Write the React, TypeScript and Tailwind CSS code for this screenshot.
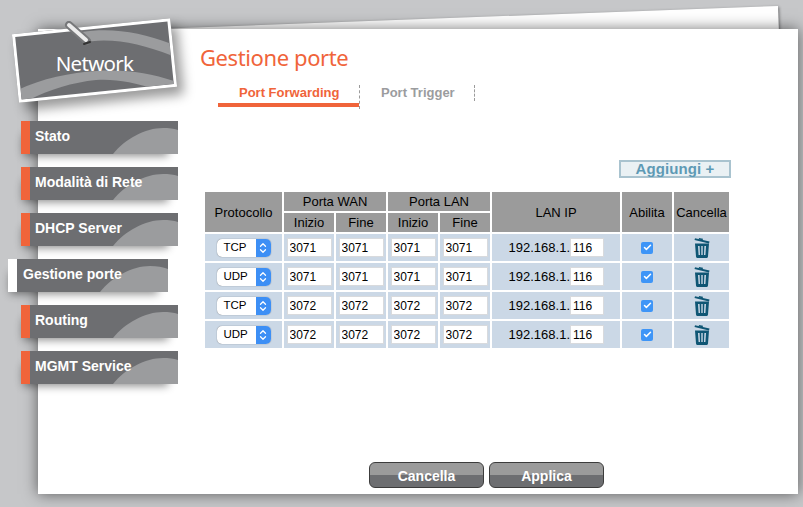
import { Check, ChevronDown, ChevronUp } from "lucide-react";

const menu = ["Stato", "Modalità di Rete", "DHCP Server", "Gestione porte", "Routing", "MGMT Service"];

const rows = [
  { proto: "TCP", port: "3071" },
  { proto: "UDP", port: "3071" },
  { proto: "TCP", port: "3072" },
  { proto: "UDP", port: "3072" },
];

function MenuItem({ label, active }: { label: string; active: boolean }) {
  return (
    <div
      className={
        active
          ? "relative -ml-[13px] flex h-[33px] w-[160px] shadow-[-4px_8px_8px_-6px_rgba(0,0,0,0.45)]"
          : "relative flex h-[33px] w-[157px] shadow-[-4px_8px_8px_-6px_rgba(0,0,0,0.45)]"
      }
    >
      <div className={active ? "w-[9px] bg-white" : "w-[9px] bg-[#f0643a]"} />
      <div className="relative flex-1 overflow-hidden bg-[#6d6e71]">
        <svg className="absolute left-0 top-0" width="151" height="33" viewBox="0 0 151 33">
          <path d="M83 33C95 18 115 7 133 7C140 7 146 8 151 10V33Z" fill="#9b9c9e" />
        </svg>
        <span
          className={
            active
              ? "relative block pl-[6px] pt-[7px] text-[14px] font-bold leading-[17px] text-white"
              : "relative block pl-[5px] pt-[7px] text-[14px] font-bold leading-[17px] text-white"
          }
        >
          {label}
        </span>
      </div>
    </div>
  );
}

function NetworkCard() {
  return (
    <div className="absolute left-[15px] top-[26px] z-10 flex h-[69px] w-[159px] items-center justify-center">
      <div className="absolute inset-0 -rotate-[5.8deg] overflow-hidden border-[3px] border-white bg-[#6d6e71] shadow-[6px_8px_12px_rgba(0,0,0,0.4)]">
        <svg className="absolute left-0 top-0" width="153" height="63" viewBox="3 3 153 63">
          <path d="M70 5C100 3 130 12 156 25V37C130 24 105 15 79 15L70 12Z" fill="#9b9c9e" />
          <path d="M0 56C25 47 55 44 80 45C110 46 135 53 159 64V70H140C115 60 100 55 79 54C55 54 30 59 8 68H0Z" fill="#9b9c9e" />
        </svg>
      </div>
      <span className="relative pt-[6px] font-['Noto_Sans',sans-serif] text-[20.5px] leading-none tracking-[-0.7px] text-white">
        Network
      </span>
      <svg className="absolute left-[49px] -top-[5px]" width="30" height="26" viewBox="0 0 30 26">
        <path d="M5 4L23 20" stroke="#77787a" strokeWidth="8" strokeLinecap="round" />
        <path d="M5 4L22 19" stroke="#ececec" strokeWidth="4" strokeLinecap="round" />
        <path d="M20 23L26 21" stroke="#333333" strokeWidth="2" strokeLinecap="round" />
      </svg>
    </div>
  );
}

function ProtoSelect({ value }: { value: string }) {
  return (
    <div className="mx-auto flex h-[18px] w-[54px] overflow-hidden rounded-[5px] bg-white shadow-[0_0_1px_rgba(0,0,0,0.6)]">
      <span className="flex-1 pl-[7px] text-left text-[11.5px] leading-[17px] text-black">{value}</span>
      <div className="flex w-[15px] flex-col items-center justify-center bg-[#3d8ff5] text-white">
        <ChevronUp size={10} strokeWidth={3} className="-mb-[2px]" />
        <ChevronDown size={10} strokeWidth={3} className="-mt-[2px]" />
      </div>
    </div>
  );
}

function TextBox({ value, className }: { value: string; className: string }) {
  return (
    <input
      readOnly
      value={value}
      className={`h-[19px] border border-[#d8dadd] bg-white text-[12px] text-black outline-none ${className}`}
    />
  );
}

function TrashIcon() {
  return (
    <svg className="mx-auto block" width="18" height="22" viewBox="0 0 18 22" fill="#0f5674">
      <path d="M2 1.2L16.5 4.6L16 6.4L1.5 3Z" />
      <path d="M6 1L10 1.8L9.6 3.2L5.6 2.4Z" />
      <path fillRule="evenodd" d="M2 6.5H16L15 19.5C14.9 20.6 14 21 13 21H5C4 21 3.1 20.6 3 19.5ZM5 9L5.6 18H7L6.6 9ZM8.3 9V18H9.7V9ZM11.4 9L11 18H12.4L13 9Z" />
    </svg>
  );
}

export default function App() {
  const headCls = "bg-[#9b9b9b] p-0 text-center align-middle text-[13px] font-normal leading-[15px] text-black";
  const cellCls = "bg-[#cbd8e6] p-0 text-center align-middle";

  return (
    <div className="relative h-[507px] w-[803px] overflow-hidden bg-[#c6c7c9] font-['Liberation_Sans',Arial,sans-serif]">
      {/* the two sheets of paper behind everything */}
      <div className="absolute left-[98px] top-[6px] h-[70px] w-[680px] origin-top-right -rotate-[2.1deg] bg-white shadow-[1px_1px_3px_rgba(0,0,0,0.45)]" />
      <div className="absolute left-[38px] top-[29px] h-[465px] w-[760px] bg-white shadow-[0_0_14px_rgba(0,0,0,0.55)]" />

      <NetworkCard />

      <div className="relative flex h-full">
        <aside className="flex w-[200px] shrink-0 flex-col gap-[13px] pl-[21px] pt-[121px]">
          {menu.map((m) => (
            <MenuItem key={m} label={m} active={m === "Gestione porte"} />
          ))}
        </aside>

        <main className="flex flex-1 flex-col pt-[41px]">
          <h1 className="font-['Noto_Sans',sans-serif] text-[22px] leading-[32px] tracking-[-0.4px] text-[#f0643a]">
            Gestione porte
          </h1>

          <div className="ml-[18px] mt-[12px] flex h-[22px] items-start">
            <div className="relative h-[22px] w-[141px] border-b-[4px] border-[#f0643a] pl-[21px] text-[13px] font-bold leading-[16px] text-[#f0643a]">
              Port Forwarding
              <span className="absolute -right-px top-0 h-[24px] border-r border-dashed border-[#9b9b9b]" />
            </div>
            <div className="h-[16px] w-[116px] border-r border-dashed border-[#9b9b9b] pl-[22px] text-[13px] font-bold leading-[16px] text-[#9b9c9e]">
              Port Trigger
            </div>
          </div>

          <div className="ml-[419px] mt-[53px] flex h-[18px] w-[112px] items-center justify-center border-2 border-[#a9c3cf] bg-[#eaf1f4] text-[15px] font-bold tracking-[0.1px] text-[#5e9ab5]">
            Aggiungi +
          </div>

          <table className="ml-[3px] mt-[12px] w-[528px] table-fixed border-separate border-spacing-[2px]">
            <colgroup>
              <col className="w-[77px]" />
              <col className="w-[50px]" />
              <col className="w-[50px]" />
              <col className="w-[50px]" />
              <col className="w-[50px]" />
              <col className="w-[128px]" />
              <col className="w-[50px]" />
              <col className="w-[55px]" />
            </colgroup>
            <thead>
              <tr className="h-[19px]">
                <th rowSpan={2} className={headCls}>Protocollo</th>
                <th colSpan={2} className={headCls}>Porta WAN</th>
                <th colSpan={2} className={headCls}>Porta LAN</th>
                <th rowSpan={2} className={headCls}>LAN IP</th>
                <th rowSpan={2} className={headCls}>Abilita</th>
                <th rowSpan={2} className={headCls}>Cancella</th>
              </tr>
              <tr className="h-[19px]">
                <th className={headCls}>Inizio</th>
                <th className={headCls}>Fine</th>
                <th className={headCls}>Inizio</th>
                <th className={headCls}>Fine</th>
              </tr>
            </thead>
            <tbody>
              {rows.map((r, i) => (
                <tr key={i} className="h-[27px]">
                  <td className={cellCls}>
                    <ProtoSelect value={r.proto} />
                  </td>
                  {[0, 1, 2, 3].map((n) => (
                    <td key={n} className={cellCls}>
                      <TextBox value={r.port} className="mx-auto block w-[45px] pl-[2px]" />
                    </td>
                  ))}
                  <td className={cellCls}>
                    <div className="flex items-center justify-end pr-[16px] text-[13px] text-black">
                      192.168.1.
                      <TextBox value="116" className="w-[34px] pl-[2px]" />
                    </div>
                  </td>
                  <td className={cellCls}>
                    <div className="mx-auto flex h-[12px] w-[12px] items-center justify-center rounded-[2px] bg-[#3e95f7] text-white">
                      <Check size={9} strokeWidth={4} />
                    </div>
                  </td>
                  <td className={cellCls}>
                    <TrashIcon />
                  </td>
                </tr>
              ))}
            </tbody>
          </table>

          <div className="ml-[169px] mt-[112px] flex gap-[5px]">
            {["Cancella", "Applica"].map((b) => (
              <button
                key={b}
                className="h-[26px] w-[115px] rounded-[6px] border border-[#3c3c3c] bg-[linear-gradient(#9b9b9b_0,#9b9b9b_50%,#6d6e71_50%,#6d6e71_100%)] pt-[2px] text-[14px] font-bold leading-none text-white"
              >
                {b}
              </button>
            ))}
          </div>
        </main>
      </div>
    </div>
  );
}
